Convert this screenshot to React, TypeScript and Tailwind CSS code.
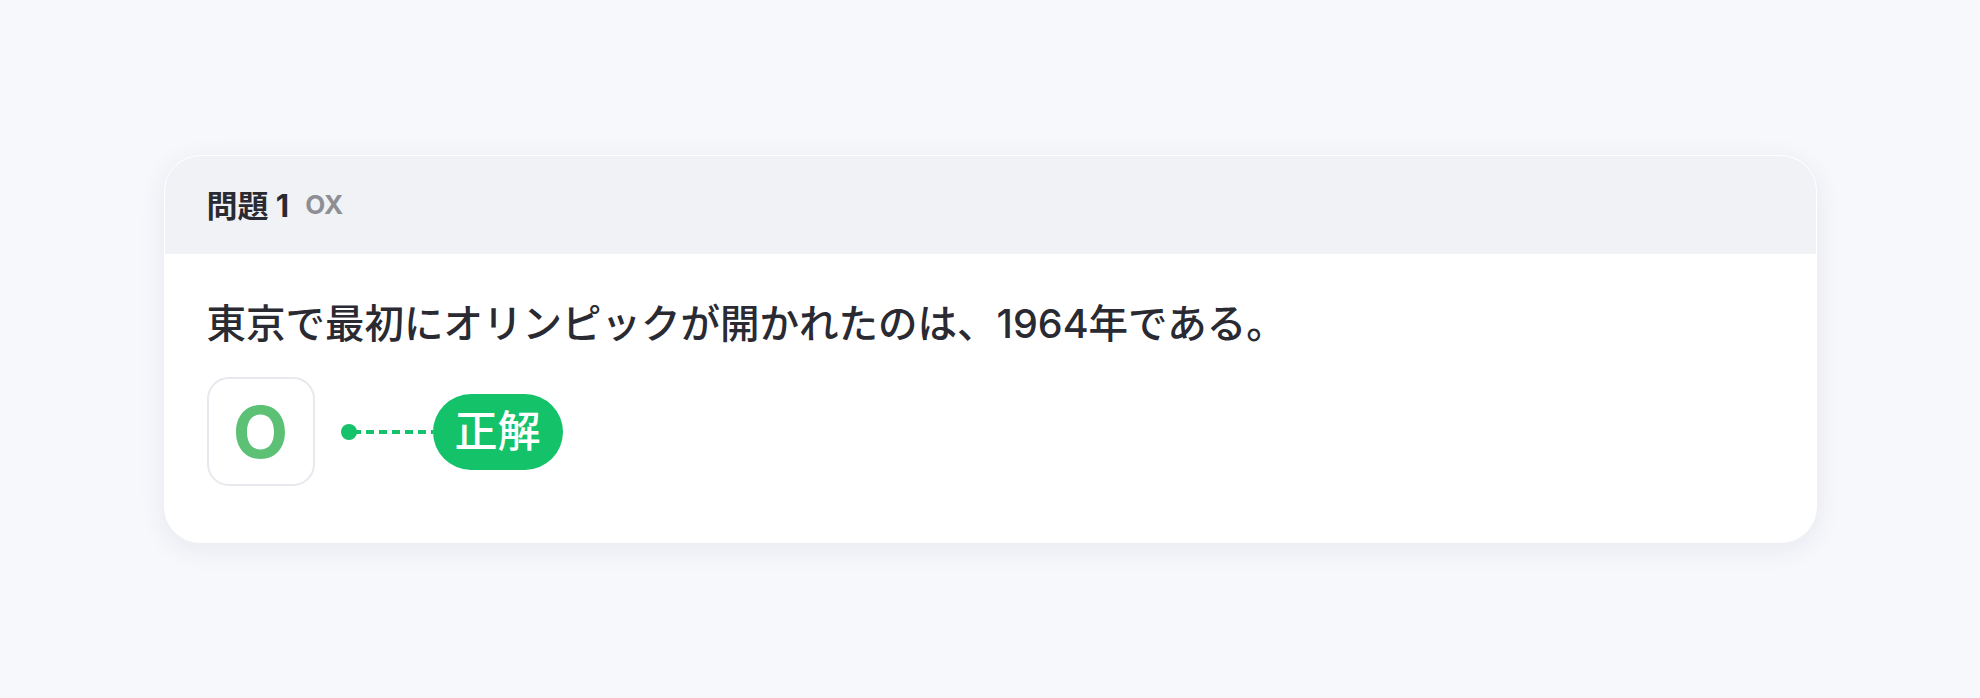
export default function App() {
  const font = { fontFamily: 'Inter, "Noto Sans CJK JP", sans-serif' };
  return (
    <div className="min-h-screen bg-[#f7f8fc] pt-[155px]" style={font}>
      <div className="mx-auto w-[1653px] overflow-hidden rounded-[36px] border border-white bg-white shadow-[0_6px_28px_rgba(30,35,60,0.07)]">
        {/* header */}
        <div className="flex h-[98px] items-center gap-[16px] bg-[#f1f2f6] px-[42px]">
          <span className="text-[31px] font-bold leading-none text-[#2a2a33]">問題&nbsp;1</span>
          <span className="text-[26px] font-bold leading-none text-[#8e8e95]">OX</span>
        </div>

        {/* body */}
        <div className="px-[42px] pt-[42px] pb-[56px]">
          <p className="text-[39.5px] font-medium leading-[57px] text-[#2a2a33]">
            東京で最初にオリンピックが開かれたのは、1964年である。
          </p>

          <div className="mt-6 flex items-center">
            <div className="flex h-[109px] w-[108px] items-center justify-center rounded-[22px] border-2 border-[#e8e8ee] bg-white">
              <span className="text-[72px] font-bold leading-none text-[#5cc174]">O</span>
            </div>

            <div className="ml-[26px] flex items-center">
              <span className="h-4 w-4 rounded-full bg-[#14c26a]" />
              <span className="-ml-1 h-[4px] w-[80px] bg-[repeating-linear-gradient(90deg,#14c26a_0_8px,transparent_8px_13px)]" />
            </div>

            <div className="flex h-[76px] items-center rounded-full bg-[#14c26a] px-[22px]">
              <span className="text-[43px] font-medium leading-none text-white">正解</span>
            </div>
          </div>
        </div>
      </div>
    </div>
  );
}
